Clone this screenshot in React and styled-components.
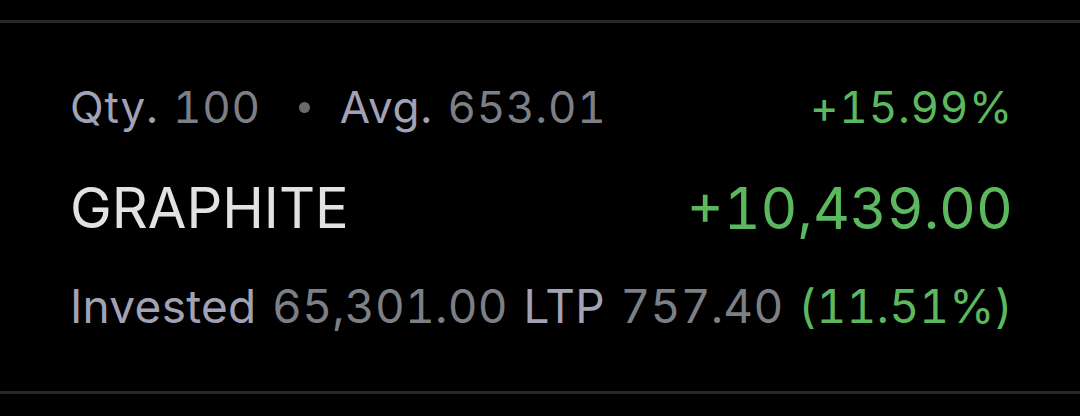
import React from "react";
import styled, { createGlobalStyle } from "styled-components";

const Global = createGlobalStyle`
  html, body {
    margin: 0;
    padding: 0;
    background: #000;
  }
  body {
    font-family: Inter, "Noto Sans", sans-serif;
    font-variant-numeric: tabular-nums;
  }
`;

const Screen = styled.div`
  width: 1080px;
  height: 416px;
  background: #000;
  display: flex;
  flex-direction: column;
`;

const Divider = styled.div`
  height: 3px;
  background: #26262c;
  margin-top: ${(p) => p.top}px;
`;

const Card = styled.div`
  display: flex;
  flex-direction: column;
  padding: 58px 67px 0 70px;
`;

const Row = styled.div`
  display: flex;
  align-items: center;
  justify-content: space-between;
  height: ${(p) => p.h}px;
  font-size: ${(p) => p.size}px;
  letter-spacing: ${(p) => p.track || 0}px;
  word-spacing: ${(p) => p.words || 0}px;
  white-space: pre;
`;

const Group = styled.div`
  display: flex;
  align-items: center;
`;

const Label = styled.span`
  color: #a2a2b6;
`;

const Value = styled.span`
  color: #7c7f86;
`;

const Green = styled.span`
  color: #5cb85f;
  font-size: ${(p) => (p.size ? `${p.size}px` : "inherit")};
`;

const Name = styled.span`
  font-size: 56px;
  color: #e2e2e2;
`;

const Dot = styled.span`
  width: 11px;
  height: 11px;
  border-radius: 50%;
  background: #6a6a6e;
  margin: 0 30px 0 38px;
`;

export default function App() {
  return (
    <Screen>
      <Global />
      <Divider top={20} />
      <Card>
        <Row h={52} size={44} track={0.75} words={2}>
          <Group>
            <Label>Qty. </Label>
            <Value>100</Value>
            <Dot />
            <Label>Avg. </Label>
            <Value>653.01</Value>
          </Group>
          <Green>+15.99%</Green>
        </Row>
        <Row h={150} size={44}>
          <Name>GRAPHITE</Name>
          <Green size={57}>+10,439.00</Green>
        </Row>
        <Row h={46} size={46} track={0.25} words={3}>
          <Group>
            <Label>Invested </Label>
            <Value>65,301.00 </Value>
            <Label>LTP </Label>
            <Value>757.40</Value>
          </Group>
          <Green>(11.51%)</Green>
        </Row>
      </Card>
      <Divider top={62} />
    </Screen>
  );
}
